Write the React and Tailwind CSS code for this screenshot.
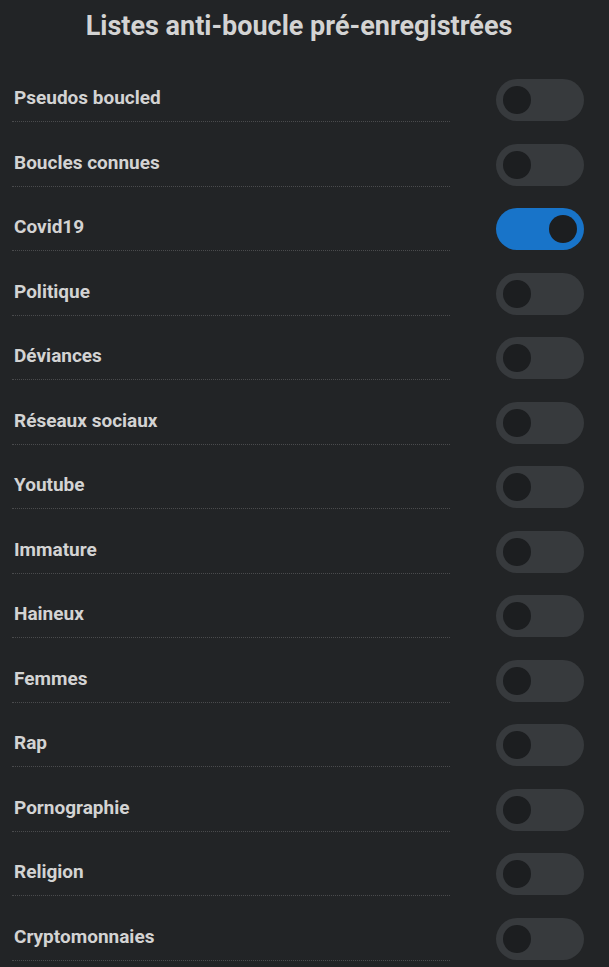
const lists = [
  { name: "Pseudos boucled", on: false },
  { name: "Boucles connues", on: false },
  { name: "Covid19", on: true },
  { name: "Politique", on: false },
  { name: "Déviances", on: false },
  { name: "Réseaux sociaux", on: false },
  { name: "Youtube", on: false },
  { name: "Immature", on: false },
  { name: "Haineux", on: false },
  { name: "Femmes", on: false },
  { name: "Rap", on: false },
  { name: "Pornographie", on: false },
  { name: "Religion", on: false },
  { name: "Cryptomonnaies", on: false },
];

function Toggle({ on }) {
  return (
    <div
      className={
        "flex h-[42px] w-[88px] shrink-0 items-center rounded-full px-[7px] " +
        (on ? "justify-end bg-[#1874c9]" : "justify-start bg-[#373a3d]")
      }
    >
      <div className="h-[28px] w-[28px] rounded-full bg-[#1c1e20]" />
    </div>
  );
}

export default function App() {
  return (
    <div className="min-h-screen bg-[#222426] font-['Roboto',sans-serif] text-[#d3d3d3]">
      <h1 className="flex h-[57.5px] items-start justify-center pt-[8px] pr-[11px] text-[27px] font-bold leading-[36px]">
        Listes anti-boucle pré-enregistrées
      </h1>
      <div className="flex flex-col">
        {lists.map((l) => (
          <div key={l.name} className="flex h-[64.5px]">
            <div className="ml-3 flex w-[438px] items-center border-b border-dotted border-[#4a4b4d] pt-[18px] pl-[2px] text-[19px] font-bold">
              {l.name}
            </div>
            <div className="ml-[46px] mt-[21.5px]">
              <Toggle on={l.on} />
            </div>
          </div>
        ))}
      </div>
    </div>
  );
}
